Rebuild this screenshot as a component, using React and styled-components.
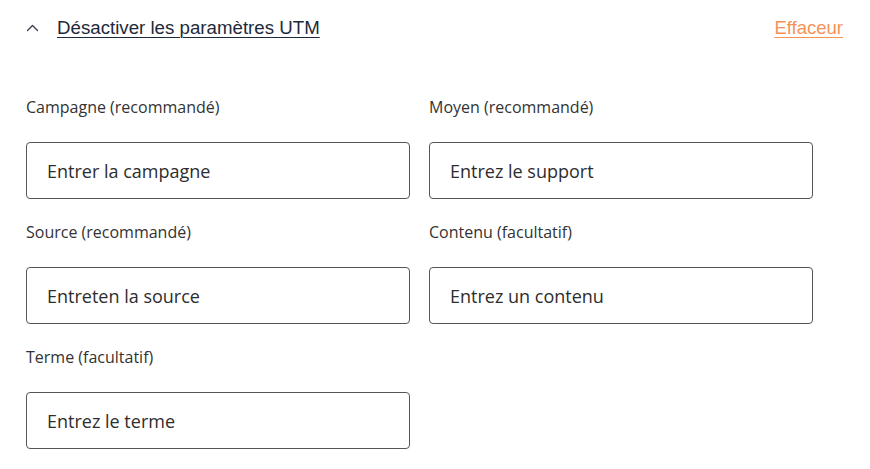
import React from 'react';
import styled, { createGlobalStyle } from 'styled-components';

const Global = createGlobalStyle`
  body {
    margin: 0;
    background: #ffffff;
  }
`;

const Panel = styled.div`
  width: 870px;
  padding: 17px 27px 0 26px;
  box-sizing: border-box;
`;

const Header = styled.div`
  display: flex;
  align-items: center;
  justify-content: space-between;
  height: 22px;
`;

const Toggle = styled.button`
  display: flex;
  align-items: center;
  gap: 18px;
  padding: 0;
  border: none;
  background: none;
  cursor: pointer;
  font-family: 'Liberation Sans', Arial, sans-serif;
  font-size: 18.7px;
  color: #1d2a3a;
`;

const ToggleText = styled.span`
  text-decoration: underline;
  text-underline-offset: 3px;
  text-decoration-thickness: 1px;
`;

const ClearLink = styled.a`
  font-family: 'Liberation Sans', Arial, sans-serif;
  font-size: 18.5px;
  color: #f79257;
  text-decoration: underline;
  text-underline-offset: 3px;
  cursor: pointer;
`;

const Grid = styled.div`
  display: grid;
  grid-template-columns: 384px 384px;
  column-gap: 19px;
  row-gap: 23px;
  margin-top: 58px;
`;

const Field = styled.label`
  display: flex;
  flex-direction: column;
  gap: 25px;
`;

const Label = styled.span`
  font-family: 'Open Sans', 'Noto Sans', sans-serif;
  font-size: 16px;
  line-height: 20px;
  color: #333333;
`;

const Input = styled.input`
  box-sizing: border-box;
  width: 100%;
  height: 57px;
  padding: 0 20px;
  border: 1px solid #555555;
  border-radius: 4px;
  font-family: 'Open Sans', 'Noto Sans', sans-serif;
  font-size: 18px;
  color: #2d2d2d;
  outline: none;
  &::placeholder {
    color: #2d2d2d;
  }
`;

const fields = [
  { label: 'Campagne (recommandé)', placeholder: 'Entrer la campagne' },
  { label: 'Moyen (recommandé)', placeholder: 'Entrez le support' },
  { label: 'Source (recommandé)', placeholder: 'Entreten la source' },
  { label: 'Contenu (facultatif)', placeholder: 'Entrez un contenu' },
  { label: 'Terme (facultatif)', placeholder: 'Entrez le terme' },
];

function Chevron() {
  return (
    <svg width="13" height="8" viewBox="0 0 13 8" fill="none">
      <path d="M1.5 6.5 L6.5 1.5 L11.5 6.5" stroke="#3a4250" strokeWidth="1.4" strokeLinecap="round" strokeLinejoin="round" />
    </svg>
  );
}

export default function App() {
  return (
    <Panel>
      <Global />
      <Header>
        <Toggle>
          <Chevron />
          <ToggleText>Désactiver les paramètres UTM</ToggleText>
        </Toggle>
        <ClearLink>Effaceur</ClearLink>
      </Header>
      <Grid>
        {fields.map(f => (
          <Field key={f.label}>
            <Label>{f.label}</Label>
            <Input placeholder={f.placeholder} />
          </Field>
        ))}
      </Grid>
    </Panel>
  );
}
